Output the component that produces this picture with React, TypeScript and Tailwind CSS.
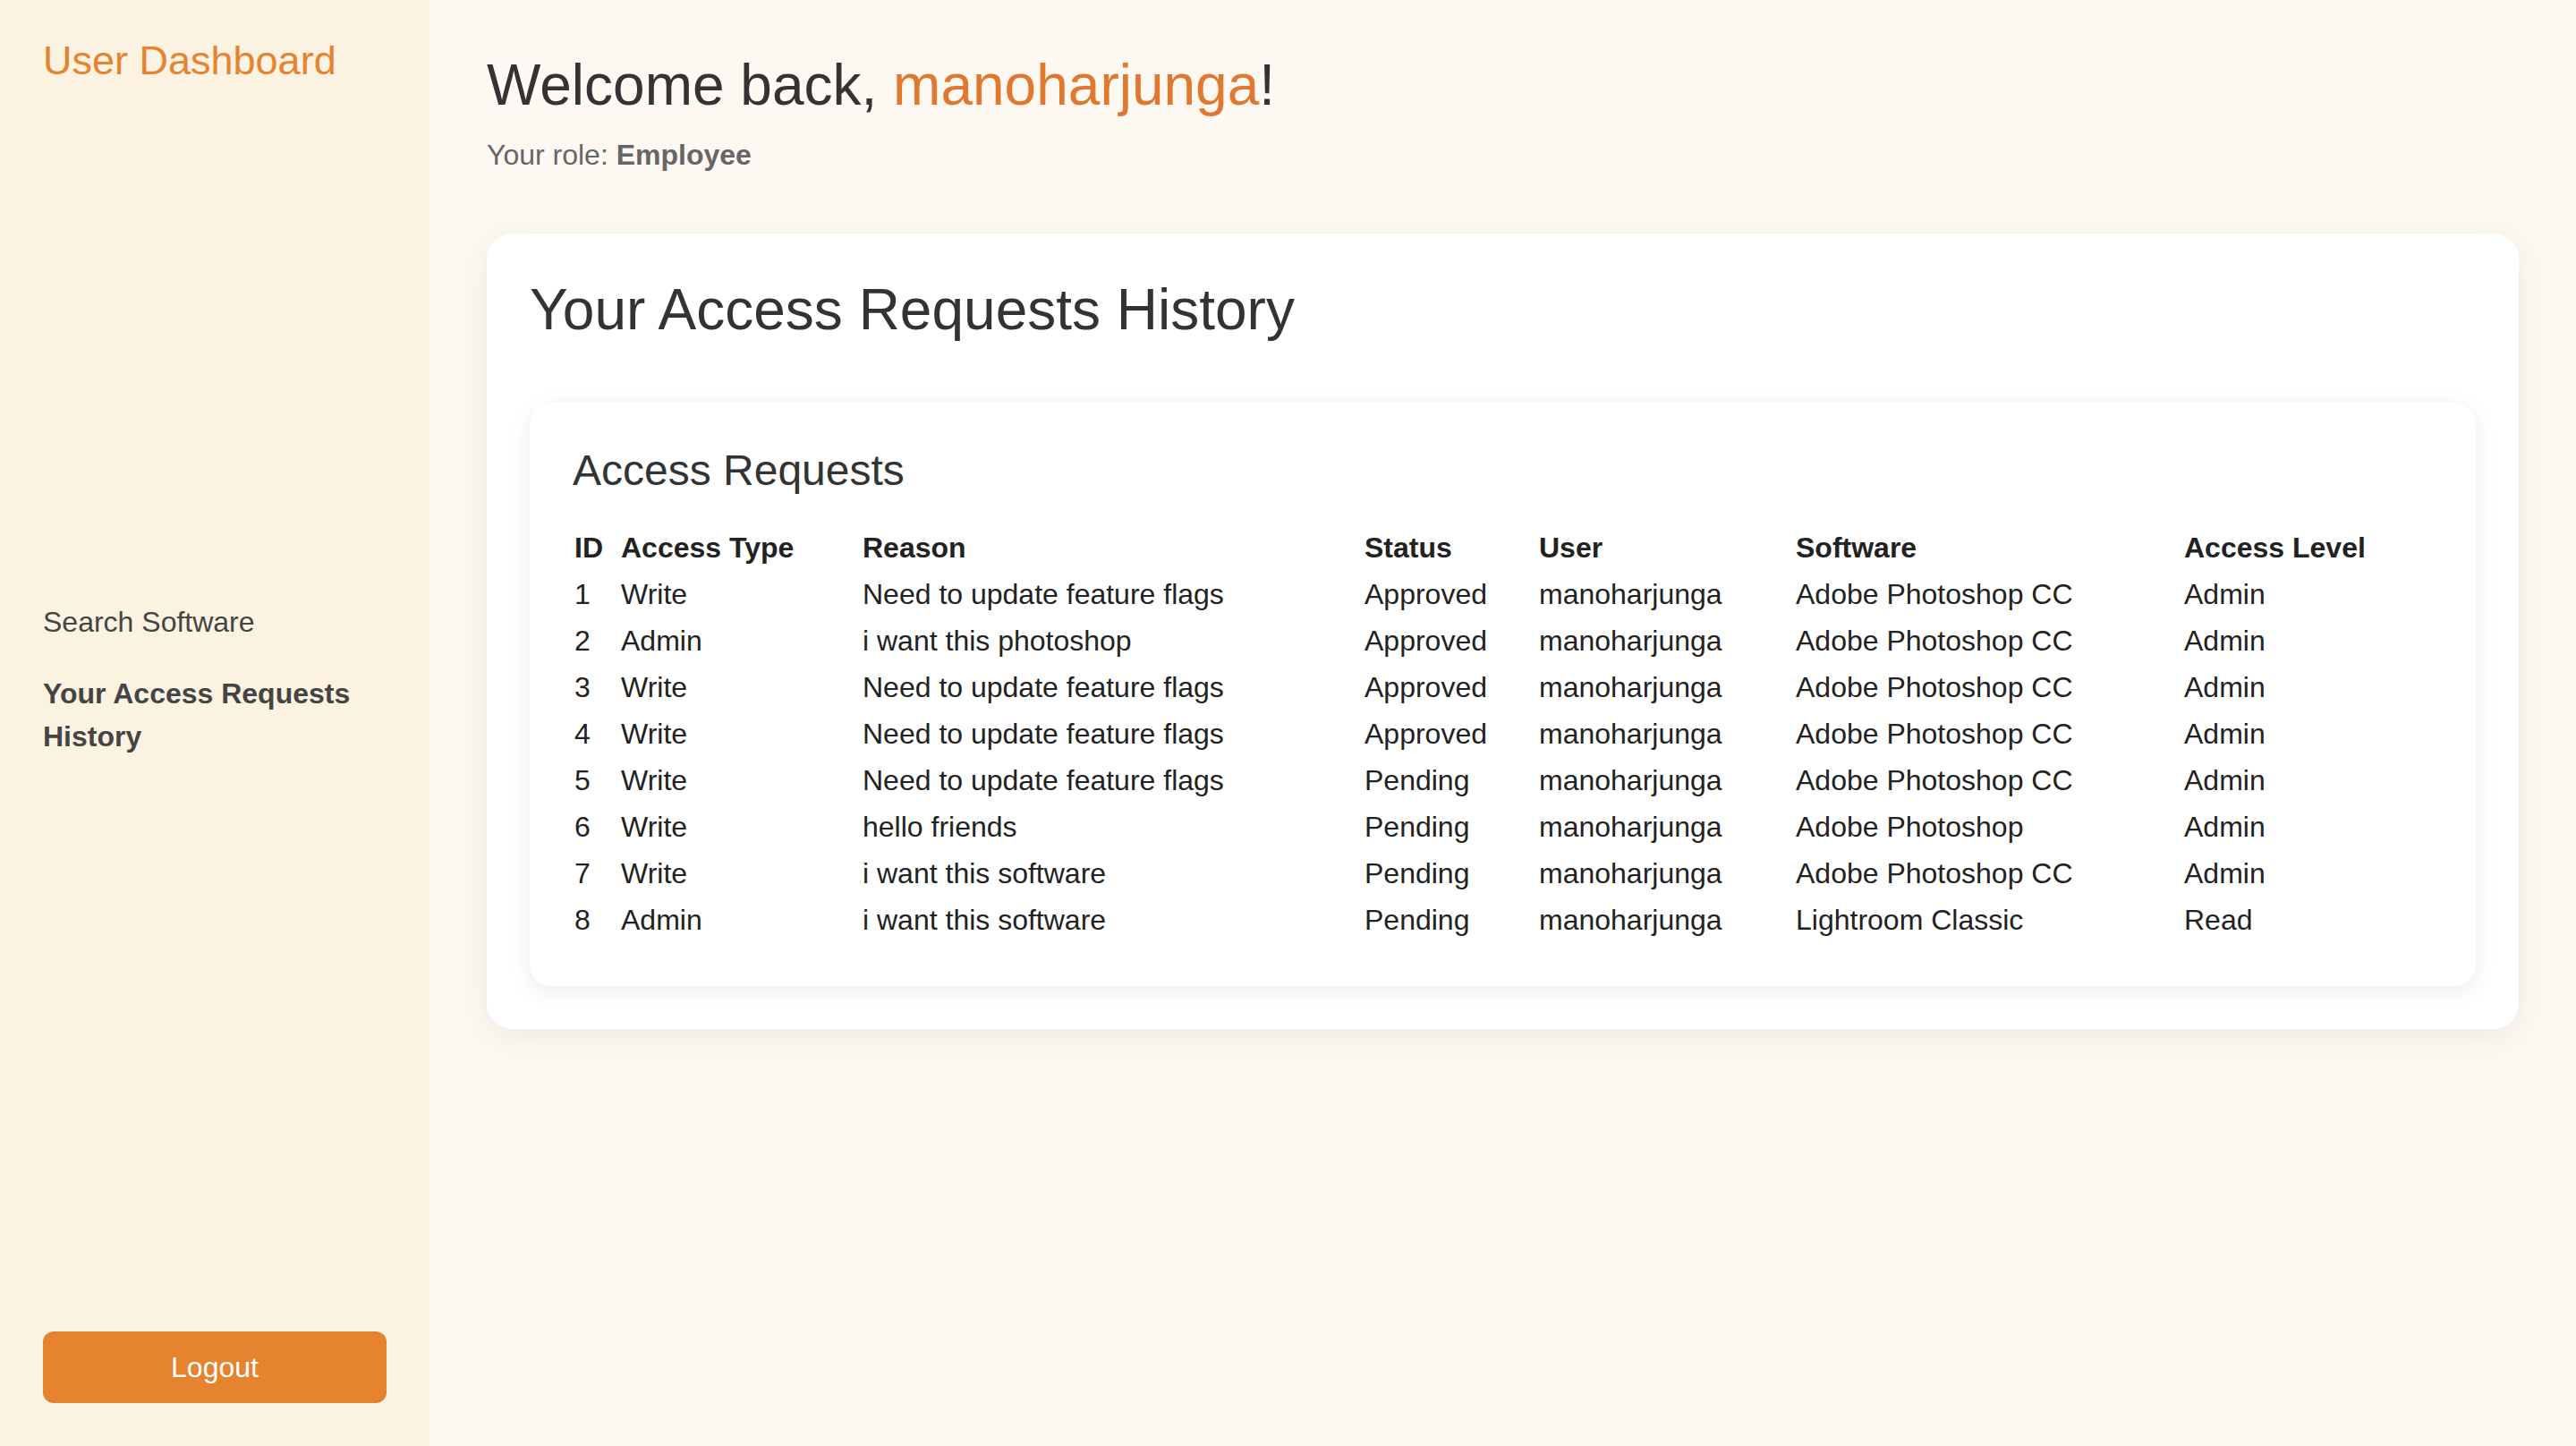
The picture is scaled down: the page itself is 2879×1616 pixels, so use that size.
const requests = [
  { id: 1, type: "Write", reason: "Need to update feature flags", status: "Approved", user: "manoharjunga", software: "Adobe Photoshop CC", level: "Admin" },
  { id: 2, type: "Admin", reason: "i want this photoshop", status: "Approved", user: "manoharjunga", software: "Adobe Photoshop CC", level: "Admin" },
  { id: 3, type: "Write", reason: "Need to update feature flags", status: "Approved", user: "manoharjunga", software: "Adobe Photoshop CC", level: "Admin" },
  { id: 4, type: "Write", reason: "Need to update feature flags", status: "Approved", user: "manoharjunga", software: "Adobe Photoshop CC", level: "Admin" },
  { id: 5, type: "Write", reason: "Need to update feature flags", status: "Pending", user: "manoharjunga", software: "Adobe Photoshop CC", level: "Admin" },
  { id: 6, type: "Write", reason: "hello friends", status: "Pending", user: "manoharjunga", software: "Adobe Photoshop", level: "Admin" },
  { id: 7, type: "Write", reason: "i want this software", status: "Pending", user: "manoharjunga", software: "Adobe Photoshop CC", level: "Admin" },
  { id: 8, type: "Admin", reason: "i want this software", status: "Pending", user: "manoharjunga", software: "Lightroom Classic", level: "Read" },
];

const headers = ["ID", "Access Type", "Reason", "Status", "User", "Software", "Access Level"];

function Sidebar() {
  return (
    <aside className="flex h-[1616px] w-[480px] shrink-0 flex-col bg-[#fcf2e2] px-[48px] pt-[42px] pb-[48px]">
      <h2 className="text-[45px] leading-[52px] text-[#e5832f]">User Dashboard</h2>
      <nav className="mt-[577px] flex flex-col gap-[32px] text-[32px] leading-[48px] text-[#444]">
        <a className="cursor-pointer">Search Software</a>
        <a className="cursor-pointer font-bold">Your Access Requests History</a>
      </nav>
      <button className="mt-auto h-[80px] w-full rounded-[12px] bg-[#e5832f] text-[32px] text-white">
        Logout
      </button>
    </aside>
  );
}

function RequestsTable() {
  return (
    <div className="mt-[67px] rounded-[24px] bg-white p-[48px] shadow-[0_6px_24px_rgba(0,0,0,0.08)]">
      <h3 className="text-[48px] leading-[55px] text-[#333]">Access Requests</h3>
      <table className="mt-[33px] w-full table-fixed border-collapse text-left text-[32px] leading-[36px] text-[#222]">
        <colgroup>
          <col className="w-[52px]" />
          <col className="w-[270px]" />
          <col className="w-[561px]" />
          <col className="w-[195px]" />
          <col className="w-[287px]" />
          <col className="w-[434px]" />
          <col />
        </colgroup>
        <thead>
          <tr>
            {headers.map((h) => (
              <th key={h} className="py-[8px] pr-[4px] pl-[2px] font-bold whitespace-nowrap">
                {h}
              </th>
            ))}
          </tr>
        </thead>
        <tbody>
          {requests.map((r) => (
            <tr key={r.id}>
              <td className="py-[8px] pr-[4px] pl-[2px]">{r.id}</td>
              <td className="py-[8px] pr-[4px] pl-[2px]">{r.type}</td>
              <td className="py-[8px] pr-[4px] pl-[2px] whitespace-nowrap">{r.reason}</td>
              <td className="py-[8px] pr-[4px] pl-[2px]">{r.status}</td>
              <td className="py-[8px] pr-[4px] pl-[2px]">{r.user}</td>
              <td className="py-[8px] pr-[4px] pl-[2px] whitespace-nowrap">{r.software}</td>
              <td className="py-[8px] pr-[4px] pl-[2px]">{r.level}</td>
            </tr>
          ))}
        </tbody>
      </table>
    </div>
  );
}

export default function App() {
  return (
    <div className="flex min-h-screen w-full bg-[#fdf8f1] font-['Liberation_Sans',Arial,Helvetica,sans-serif]">
      <Sidebar />
      <main className="flex-1 px-[64px] pt-[59px]">
        <h1 className="text-[64px] leading-[72px] text-[#333]">
          Welcome back, <span className="text-[#e07830]">manoharjunga</span>!
        </h1>
        <p className="mt-[18px] text-[32px] leading-[48px] text-[#666]">
          Your role: <strong className="font-bold">Employee</strong>
        </p>
        <section className="mt-[64px] rounded-[28px] bg-white p-[48px] shadow-[0_8px_36px_rgba(80,60,30,0.08)]">
          <h2 className="text-[64px] leading-[74px] text-[#333]">Your Access Requests History</h2>
          <RequestsTable />
        </section>
      </main>
    </div>
  );
}
